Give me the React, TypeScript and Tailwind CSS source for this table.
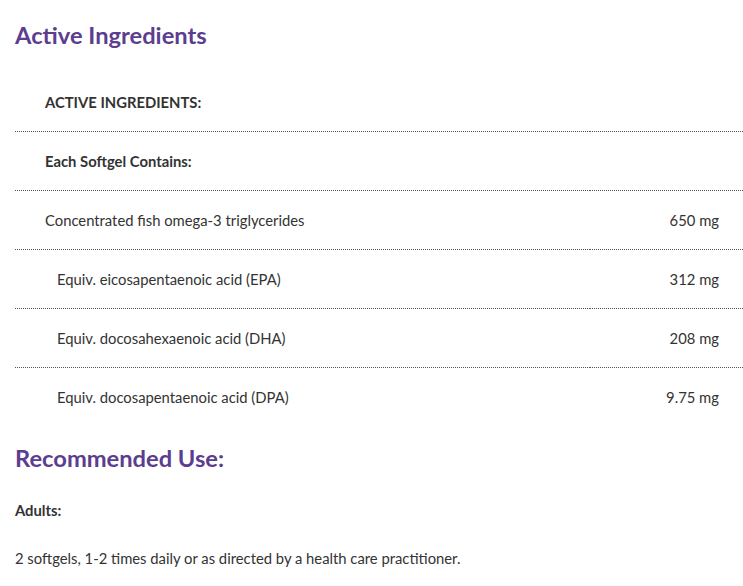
const rows = [
  { label: 'Concentrated fish omega-3 triglycerides', amount: '650 mg', indent: false },
  { label: 'Equiv. eicosapentaenoic acid (EPA)', amount: '312 mg', indent: true },
  { label: 'Equiv. docosahexaenoic acid (DHA)', amount: '208 mg', indent: true },
  { label: 'Equiv. docosapentaenoic acid (DPA)', amount: '9.75 mg', indent: true },
];

export default function App() {
  return (
    <div className="bg-white min-h-screen pl-[15px] text-[14.8px] leading-5 text-[#333]" style={{ fontFamily: 'Lato, "Open Sans", sans-serif' }}>
      <h2 className="pt-[21px] text-[23.7px] leading-[29px] font-bold text-[#5c3d8f]">Active Ingredients</h2>

      <table className="mt-[23px] w-full border-collapse">
        <tbody>
          <tr className="border-b border-dotted border-[#555]">
            <td colSpan={2} className="pl-[30px] py-[19px] font-bold">ACTIVE INGREDIENTS:</td>
          </tr>
          <tr className="border-b border-dotted border-[#555]">
            <td colSpan={2} className="pl-[30px] py-[19px] font-bold">Each Softgel Contains:</td>
          </tr>
          {rows.map((r, i) => (
            <tr key={r.label} className={i < rows.length - 1 ? 'border-b border-dotted border-[#555]' : ''}>
              <td className={`py-[19px] ${r.indent ? 'pl-[42px]' : 'pl-[30px]'}`}>{r.label}</td>
              <td className="py-[19px] pr-[24px] text-right">{r.amount}</td>
            </tr>
          ))}
        </tbody>
      </table>

      <h2 className="mt-[18px] text-[23.7px] leading-[29px] font-bold text-[#5c3d8f]">Recommended Use:</h2>
      <p className="mt-[27px] font-bold">Adults:</p>
      <p className="mt-[28px]">2 softgels, 1-2 times daily or as directed by a health care practitioner.</p>
    </div>
  );
}
